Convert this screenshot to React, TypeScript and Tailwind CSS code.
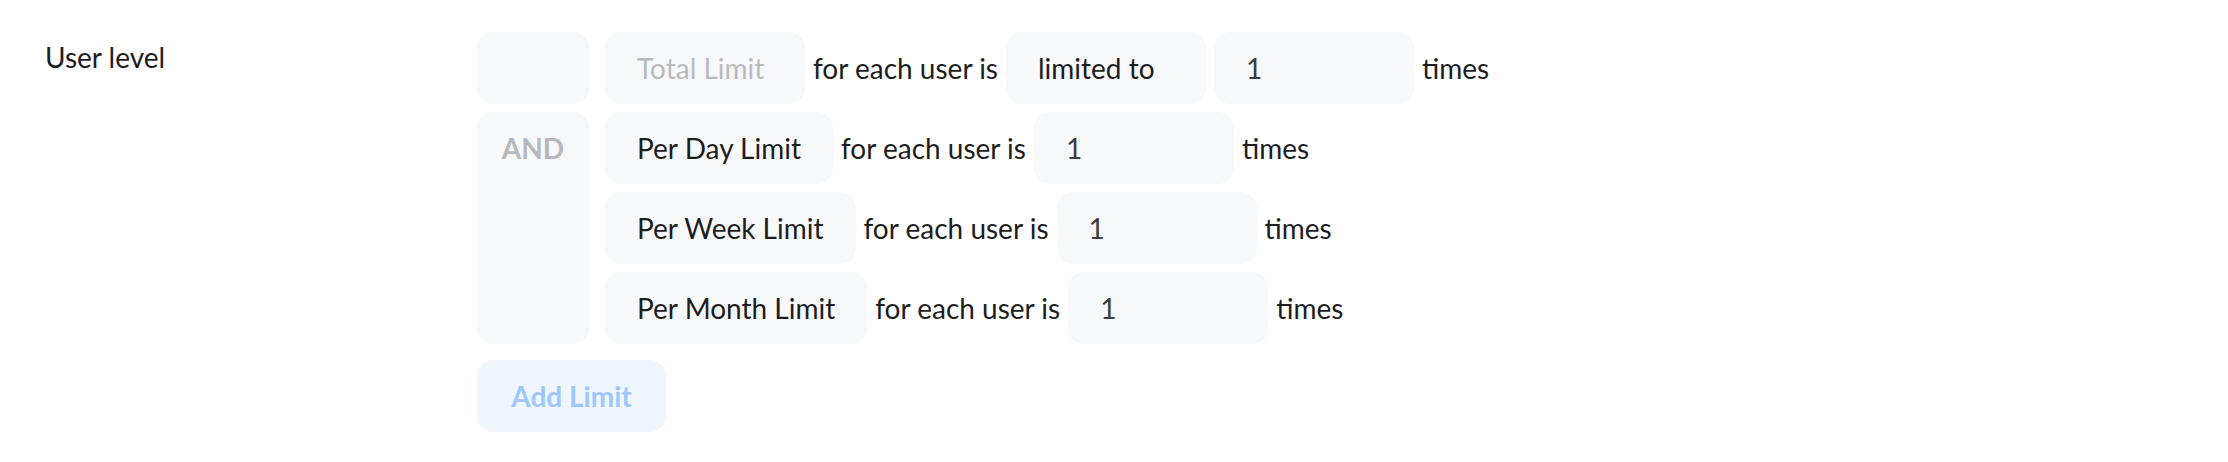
import type { ReactNode } from "react";

// ── Limit rule rows ───────────────────────────────────────────────────────────

interface LimitRow {
  label: string;
  muted?: boolean;
  mode?: string;
  value: string;
}

const ROWS: LimitRow[] = [
  { label: "Total Limit", muted: true, mode: "limited to", value: "1" },
  { label: "Per Day Limit", value: "1" },
  { label: "Per Week Limit", value: "1" },
  { label: "Per Month Limit", value: "1" },
];

const FONT = { fontFamily: "Lato, 'Open Sans', sans-serif" };

function Field({ children, className = "" }: { children: ReactNode; className?: string }) {
  return (
    <div className={`flex h-[72px] items-center rounded-2xl bg-[#f7f8fa] px-8 ${className}`}>
      {children}
    </div>
  );
}

function Row({ row }: { row: LimitRow }) {
  return (
    <div className="flex h-[72px] items-center gap-2">
      <Field className={`min-w-[200px] ${row.muted ? "text-[#b7bbbe]" : "text-[#1d1d1f]"}`}>
        {row.label}
      </Field>
      <span>for each user is</span>
      {row.mode && <Field className="w-[200px]">{row.mode}</Field>}
      <Field className="w-[200px] text-[#3c3c3e]">{row.value}</Field>
      <span>times</span>
    </div>
  );
}

export default function App() {
  return (
    <div className="min-h-screen bg-white text-[28px] text-[#1d1d1f]" style={FONT}>
      <div className="flex pt-[32px]">
        <div className="w-[477px] shrink-0 pl-[45px] leading-[50px]">User level</div>

        <div className="flex flex-col gap-4">
          <div className="grid grid-cols-[112px_auto] gap-x-4 gap-y-2">
            <div className="h-[72px] rounded-2xl bg-[#f7f8fa]" />
            <Row row={ROWS[0]} />

            <div className="row-span-3 rounded-2xl bg-[#f7f8fa]">
              <div className="flex h-[72px] items-center justify-center font-bold text-[#b5b9bc]">
                AND
              </div>
            </div>
            {ROWS.slice(1).map((r) => (
              <Row key={r.label} row={r} />
            ))}
          </div>

          <button
            type="button"
            className="flex h-[72px] w-[189px] items-center justify-center rounded-2xl bg-[#f0f6fe] font-bold text-[#9ec7fb]"
          >
            Add Limit
          </button>
        </div>
      </div>
    </div>
  );
}
